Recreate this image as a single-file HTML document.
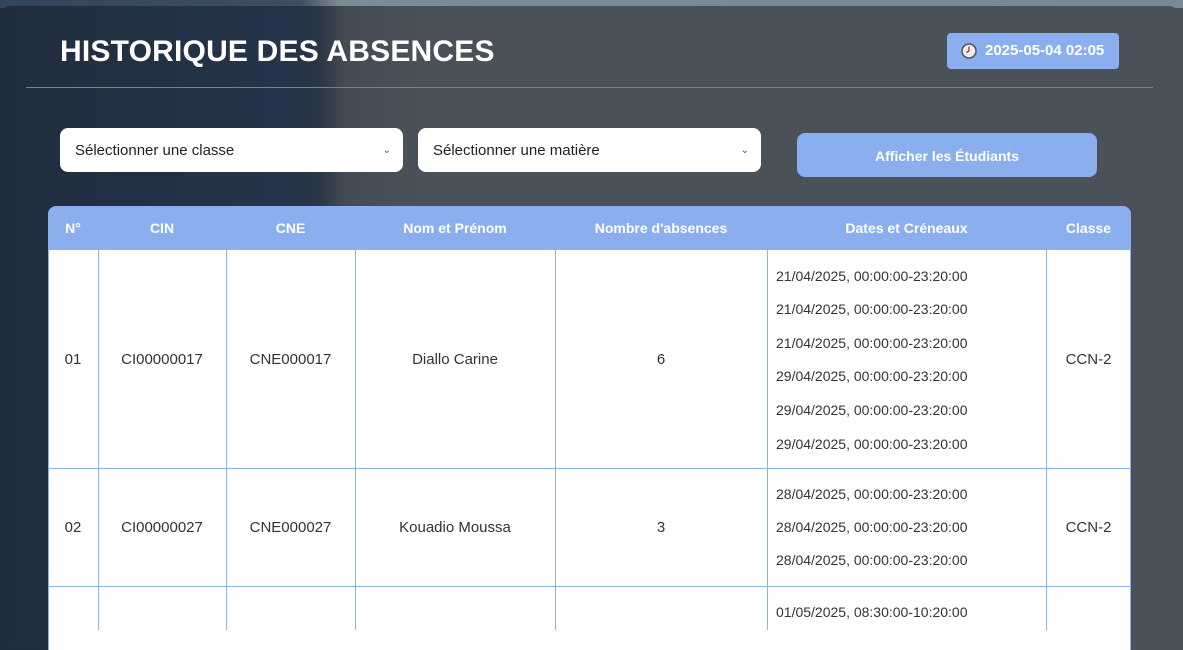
<!DOCTYPE html>
<html><head><meta charset="utf-8"><style>
*{margin:0;padding:0;box-sizing:border-box}
body{width:1183px;height:621px;overflow:hidden;font-family:"Liberation Sans",sans-serif;position:relative;
background:linear-gradient(90deg,#1f2c3d 0,#26354a 300px,#3a4350 340px,#4b5159 400px,#4c525a 1183px);}
.top{position:absolute;left:0;top:0;width:1183px;height:8px;background:linear-gradient(90deg,#33455c 0,#3e4f63 300px,#7d8a97 340px,#7b8794 1183px)}
.panel{position:absolute;left:0;top:6px;width:1179px;height:640px;border-radius:10px;
background:linear-gradient(90deg,#202d3e 0,#25344a 290px,#2a3646 320px,#444b55 345px,#4b5159 420px,#4b5159 1183px)}
h1{position:absolute;left:60px;top:35px;color:#fff;font-size:30px;font-weight:bold;letter-spacing:0.2px}
.hr{position:absolute;left:26px;top:87px;width:1127px;height:1px;background:#7b8189}
.date{position:absolute;left:947px;top:33px;width:172px;height:36px;background:#8aaeee;border-radius:4px;color:#fff;font-weight:bold;font-size:15px;line-height:36px;padding-left:38px}
.date svg{position:absolute;left:14px;top:10px}
.sel{position:absolute;top:128px;width:343px;height:44px;background:#fff;border-radius:8px;color:#222;font-size:15px;line-height:46px;padding-left:15px}
.sel span{position:absolute;right:12px;top:0;font-size:10px;color:#555}
.btn{position:absolute;left:797px;top:133px;width:300px;height:44px;background:#8aaeee;border-radius:8px;color:#fff;font-weight:bold;font-size:14px;text-align:center;line-height:46px}
.thead{position:absolute;left:48px;top:206px;width:1083px;height:44px;background:#8aaeee;border-radius:8px 8px 0 0}
.th{position:absolute;top:206px;height:44px;line-height:44px;color:#fff;font-weight:bold;font-size:14px;text-align:center}
.tbody{position:absolute;left:48px;top:250px;width:1083px;height:400px;background:#fff;border-left:1px solid #8ab0ee;border-right:1px solid #8ab0ee}
.vl{position:absolute;top:250px;width:1px;height:380px;background:#8ab0ee}
.hl{position:absolute;left:48px;width:1083px;height:1px;background:#8ab0ee}
.td{position:absolute;color:#333;font-size:15px;text-align:center}
.dl{position:absolute;left:776px;color:#333;font-size:14px}
</style></head><body>
<div class="top"></div>
<div class="panel"></div>
<h1>HISTORIQUE DES ABSENCES</h1>
<div class="date"><svg width="16" height="16" viewBox="0 0 16 16"><circle cx="8" cy="8" r="7" fill="#eee" stroke="#555" stroke-width="1.5"/><path d="M8 3.5V8" stroke="#c22" stroke-width="1.3" fill="none"/><path d="M8 8L5.5 9.5" stroke="#333" stroke-width="1.2"/></svg>2025-05-04 02:05</div>
<div class="hr"></div>
<div class="sel" style="left:60px">Sélectionner une classe<span>⌄</span></div>
<div class="sel" style="left:418px">Sélectionner une matière<span>⌄</span></div>
<div class="btn">Afficher les Étudiants</div>
<div class="thead"></div>
<div class="th" style="left:48px;width:50px">N°</div>
<div class="th" style="left:98px;width:128px">CIN</div>
<div class="th" style="left:226px;width:129px">CNE</div>
<div class="th" style="left:355px;width:200px">Nom et Prénom</div>
<div class="th" style="left:555px;width:212px">Nombre d'absences</div>
<div class="th" style="left:767px;width:279px">Dates et Créneaux</div>
<div class="th" style="left:1046px;width:85px">Classe</div>
<div class="tbody"></div>
<div class="vl" style="left:98px"></div><div class="vl" style="left:226px"></div><div class="vl" style="left:355px"></div><div class="vl" style="left:555px"></div><div class="vl" style="left:767px"></div><div class="vl" style="left:1046px"></div>
<div class="hl" style="top:468px"></div><div class="hl" style="top:586px"></div>

<div class="td" style="left:48px;width:50px;top:351px">01</div>
<div class="td" style="left:98px;width:128px;top:351px">CI00000017</div>
<div class="td" style="left:226px;width:129px;top:351px">CNE000017</div>
<div class="td" style="left:355px;width:200px;top:351px">Diallo Carine</div>
<div class="td" style="left:555px;width:212px;top:351px">6</div>
<div class="td" style="left:1046px;width:85px;top:351px">CCN-2</div>
<div class="dl" style="top:268px">21/04/2025, 00:00:00-23:20:00</div>
<div class="dl" style="top:301px">21/04/2025, 00:00:00-23:20:00</div>
<div class="dl" style="top:335px">21/04/2025, 00:00:00-23:20:00</div>
<div class="dl" style="top:368px">29/04/2025, 00:00:00-23:20:00</div>
<div class="dl" style="top:402px">29/04/2025, 00:00:00-23:20:00</div>
<div class="dl" style="top:436px">29/04/2025, 00:00:00-23:20:00</div>

<div class="td" style="left:48px;width:50px;top:519px">02</div>
<div class="td" style="left:98px;width:128px;top:519px">CI00000027</div>
<div class="td" style="left:226px;width:129px;top:519px">CNE000027</div>
<div class="td" style="left:355px;width:200px;top:519px">Kouadio Moussa</div>
<div class="td" style="left:555px;width:212px;top:519px">3</div>
<div class="td" style="left:1046px;width:85px;top:519px">CCN-2</div>
<div class="dl" style="top:486px">28/04/2025, 00:00:00-23:20:00</div>
<div class="dl" style="top:519px">28/04/2025, 00:00:00-23:20:00</div>
<div class="dl" style="top:552px">28/04/2025, 00:00:00-23:20:00</div>
<div class="dl" style="top:604px">01/05/2025, 08:30:00-10:20:00</div>
</body></html>
